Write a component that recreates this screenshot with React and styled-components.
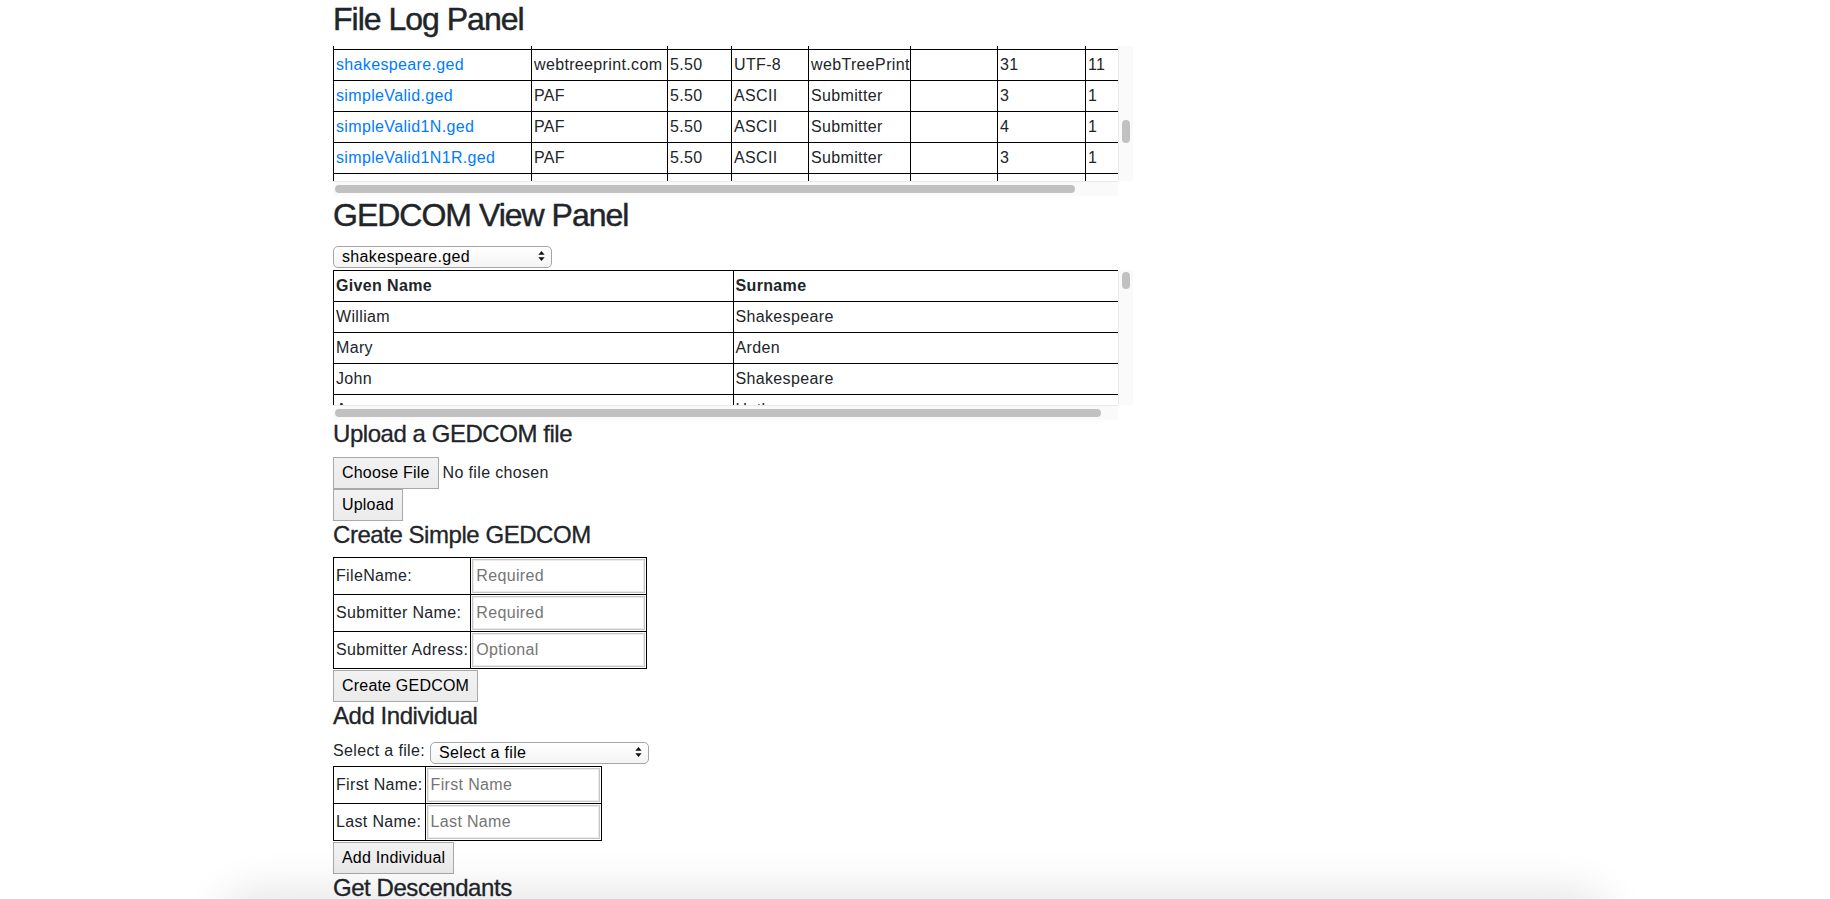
import React, { useLayoutEffect, useRef, useState } from 'react';
import styled, { createGlobalStyle } from 'styled-components';

const GlobalStyle = createGlobalStyle`
  *, *::before, *::after { box-sizing: border-box; }
  html, body { margin: 0; padding: 0; background: #fff; }
  body {
    font-family: "Liberation Sans", Arial, Helvetica, sans-serif;
    font-size: 16px;
    line-height: 1.5;
    color: #212529;
    letter-spacing: 0.35px;
  }
`;

const Page = styled.main`
  display: grid;
  grid-template-columns: 333px 800px 1fr;
`;

const Column = styled.div`
  grid-column: 2;
  display: flex;
  flex-direction: column;
  align-items: flex-start;
`;

const PanelTitle = styled.h2`
  margin: 0 0 8px;
  font-size: 32px;
  font-weight: 500;
  line-height: 1.2;
  letter-spacing: -1px;
  -webkit-text-stroke: 0.45px currentColor;
`;

const SectionTitle = styled.h4`
  margin: 0 0 8px;
  font-size: 24px;
  font-weight: 500;
  line-height: 1.2;
  letter-spacing: -0.45px;
  -webkit-text-stroke: 0.3px currentColor;
`;

/* scroll panel drawn with its own (mac-style) scroll bars */
const ScrollFrame = styled.div`
  display: grid;
  grid-template-columns: 785px 15px;
  grid-template-rows: 135px 15px;
  width: 800px;
  height: 150px;
  margin-top: ${(p) => p.$gap || 0}px;
`;

const Viewport = styled.div`
  overflow: hidden;
`;

const VTrack = styled.div`
  position: relative;
  background: #fafafa;
  border-left: 1px solid #ebebeb;
`;

const HTrack = styled.div`
  position: relative;
  background: #fafafa;
  border-top: 1px solid #ebebeb;
`;

const Corner = styled.div`
  background: #fff;
`;

const VThumb = styled.div`
  position: absolute;
  left: 3px;
  width: 8px;
  border-radius: 4px;
  background: #c1c1c1;
`;

const HThumb = styled.div`
  position: absolute;
  top: 3px;
  height: 8px;
  border-radius: 4px;
  background: #c1c1c1;
`;

const DataTable = styled.table`
  border-collapse: collapse;
  table-layout: fixed;
  width: ${(p) => p.$width}px;
`;

const HeadCell = styled.th`
  border: 1px solid #000;
  padding: 3px 2px;
  line-height: 24px;
  font-weight: 700;
  text-align: left;
  vertical-align: top;
`;

const Cell = styled.td`
  border: 1px solid #000;
  padding: 3px 2px;
  line-height: 24px;
  white-space: nowrap;
  overflow: hidden;
  vertical-align: top;
`;

const FileLink = styled.a`
  color: #007bff;
  text-decoration: none;
`;

const SelectLine = styled.div`
  display: flex;
  align-items: flex-end;
  gap: 5px;
  height: 24px;
`;

const SelectWrap = styled.div`
  position: relative;
  width: 219px;
  height: 22px;
`;

const NativeSelect = styled.select`
  appearance: none;
  -webkit-appearance: none;
  width: 100%;
  height: 22px;
  margin: 0;
  padding: 0 22px 0 8px;
  border: 1px solid #a5a5a5;
  border-radius: 5px;
  background: linear-gradient(#ffffff, #f4f4f4);
  font-family: inherit;
  font-size: 16px;
  letter-spacing: 0.35px;
  line-height: 20px;
  color: #000;
`;

const Arrows = styled.svg`
  position: absolute;
  right: 7px;
  top: 50%;
  transform: translateY(-50%);
  pointer-events: none;
`;

const Stack = styled.div`
  display: flex;
  flex-direction: column;
  align-items: flex-start;
`;

const FileRow = styled.div`
  display: flex;
  align-items: center;
  gap: 4px;
`;

const Button = styled.button`
  display: inline-block;
  margin: 0;
  padding: 6px 8px;
  border: 1px solid #a9a9a9;
  border-radius: 0;
  background: linear-gradient(#f2f2f2, #ebebeb);
  font-family: inherit;
  font-size: 16px;
  line-height: 18px;
  letter-spacing: 0.2px;
  color: #000;
  cursor: pointer;
`;

const ButtonLabel = styled(Button).attrs({ as: 'label' })``;

const HiddenFile = styled.input`
  display: none;
`;

const FormTable = styled.table`
  border-collapse: collapse;
  margin-top: ${(p) => p.$gap || 0}px;
  margin-bottom: 1px;
`;

const LabelCell = styled.td`
  border: 1px solid #000;
  padding: 1px 2px;
  white-space: nowrap;
  vertical-align: middle;
`;

const InputCell = styled.td`
  border: 1px solid #000;
  padding: 1px;
`;

const TextInput = styled.input`
  display: block;
  width: 173px;
  height: 34px;
  margin: 0;
  padding: 1px 3px;
  border: 1px solid #c6c6c6;
  box-shadow: inset 0 0 0 1px #ebebeb;
  font-family: inherit;
  font-size: 16px;
  letter-spacing: 0.35px;
  color: #000;
  &::placeholder { color: #757575; }
`;

const BottomShade = styled.div`
  position: fixed;
  left: 230px;
  right: 230px;
  top: calc(100% + 4px);
  height: 60px;
  border-radius: 30px;
  background: #fff;
  box-shadow: 0 0 40px 16px rgba(0, 0, 0, 0.09);
  pointer-events: none;
`;

const fileHeaders = [
  'File name (click to download)', 'Source', 'GEDC version', 'Encoding',
  'Submitter name', 'Submitter address', 'Number of individuals', 'Number of families',
];
const fileWidths = [198, 136, 64, 77, 102, 87, 88, 75];

const files = [
  ['GEDCOMtest.ged', 'PAF', '5.50', 'ASCII', 'Submitter', '', '5', '2'],
  ['ancestors.ged', 'webtreeprint.com', '5.50', 'UTF-8', 'webTreePrint', '', '14', '5'],
  ['family.ged', 'PAF', '5.50', 'ASCII', 'Submitter', '', '6', '2'],
  ['longNames.ged', 'PAF', '5.50', 'ASCII', 'Submitter', '', '3', '1'],
  ['minValid.ged', 'PAF', '5.50', 'ASCII', 'Submitter', '', '0', '0'],
  ['nuclearFamily.ged', 'PAF', '5.50', 'ASCII', 'Submitter', '', '4', '1'],
  ['quiney.ged', 'webtreeprint.com', '5.50', 'UTF-8', 'webTreePrint', '', '9', '3'],
  ['royalFamily.ged', 'PAF', '5.50', 'ANSEL', 'Submitter', '', '12', '4'],
  ['sample.ged', 'PAF', '5.50', 'ASCII', 'Submitter', '', '7', '2'],
  ['sample2Gen.ged', 'PAF', '5.50', 'ASCII', 'Submitter', '', '6', '2'],
  ['savedFile.ged', 'PAF', '5.50', 'ASCII', 'Submitter', '', '2', '1'],
  ['shakespeare.ged', 'webtreeprint.com', '5.50', 'UTF-8', 'webTreePrint', '', '31', '11'],
  ['simpleValid.ged', 'PAF', '5.50', 'ASCII', 'Submitter', '', '3', '1'],
  ['simpleValid1N.ged', 'PAF', '5.50', 'ASCII', 'Submitter', '', '4', '1'],
  ['simpleValid1N1R.ged', 'PAF', '5.50', 'ASCII', 'Submitter', '', '3', '1'],
  ['simpleValid2GenE1.ged', 'PAF', '5.50', 'ASCII', 'Submitter', '', '5', '2'],
  ['simpleValid2GenE2.ged', 'PAF', '5.50', 'ASCII', 'Submitter', '', '6', '2'],
  ['simpleValid3GenE3.ged', 'PAF', '5.50', 'ASCII', 'Submitter', '', '8', '3'],
  ['simpleValidFull.ged', 'PAF', '5.50', 'ASCII', 'Submitter', '', '10', '4'],
  ['testSaved.ged', 'PAF', '5.50', 'ASCII', 'Submitter', '', '2', '1'],
  ['twoFamilies.ged', 'PAF', '5.50', 'ASCII', 'Submitter', '', '6', '2'],
  ['validHeader.ged', 'PAF', '5.50', 'ASCII', 'Submitter', '', '1', '0'],
];

const people = [
  ['William', 'Shakespeare'], ['Mary', 'Arden'], ['John', 'Shakespeare'], ['Anne', 'Hathaway'],
  ['Susanna', 'Shakespeare'], ['Hamnet', 'Shakespeare'], ['Judith', 'Shakespeare'], ['John', 'Hall'],
  ['Elizabeth', 'Hall'], ['Thomas', 'Quiney'], ['Shakespeare', 'Quiney'], ['Richard', 'Quiney'],
  ['Thomas', 'Quiney'], ['Thomas', 'Nash'], ['John', 'Bernard'], ['Richard', 'Shakespeare'],
  ['Robert', 'Arden'], ['Joan', 'Shakespeare'], ['Margaret', 'Shakespeare'], ['Gilbert', 'Shakespeare'],
  ['Joan', 'Shakespeare'], ['Anne', 'Shakespeare'], ['Richard', 'Shakespeare'], ['Edmund', 'Shakespeare'],
  ['Richard', 'Hathaway'], ['William', 'Hart'], ['Thomas', 'Hart'], ['Michael', 'Hart'],
  ['Mary', 'Hart'], ['Agnes', 'Webbe'], ['Henry', 'Shakespeare'], ['Thomas', 'Shakespeare'],
  ['Mary', 'Shakespeare'],
];

function ScrollPanel({ gap, initialScroll, children }) {
  const viewport = useRef(null);
  const [m, setM] = useState(null);

  useLayoutEffect(() => {
    const el = viewport.current;
    if (!el) return;
    if (initialScroll) el.scrollTop = initialScroll(el);
    setM({
      sh: el.scrollHeight, ch: el.clientHeight, st: el.scrollTop,
      sw: el.scrollWidth, cw: el.clientWidth, sl: el.scrollLeft,
    });
  }, []);

  const inset = 2;
  let v = null;
  let h = null;
  if (m) {
    const vLen = m.ch - inset * 2;
    v = {
      top: inset + (m.st / m.sh) * vLen,
      height: Math.max(12, (m.ch / m.sh) * vLen),
    };
    const hLen = m.cw - inset * 2;
    h = {
      left: inset + (m.sl / m.sw) * hLen,
      width: Math.max(12, (m.cw / m.sw) * hLen),
    };
  }

  return (
    <ScrollFrame $gap={gap}>
      <Viewport ref={viewport}>{children}</Viewport>
      <VTrack>{v && <VThumb style={v} />}</VTrack>
      <HTrack>{h && <HThumb style={h} />}</HTrack>
      <Corner />
    </ScrollFrame>
  );
}

function SelectBox({ value, options }) {
  return (
    <SelectWrap>
      <NativeSelect defaultValue={value}>
        {options.map((o) => (
          <option key={o} value={o}>{o}</option>
        ))}
      </NativeSelect>
      <Arrows width="7" height="11" viewBox="0 0 7 11" aria-hidden="true">
        <path d="M3.5 0.5 L6.6 4.3 H0.4 Z" fill="#111" />
        <path d="M3.5 10.5 L6.6 6.7 H0.4 Z" fill="#111" />
      </Arrows>
    </SelectWrap>
  );
}

const scrollToTarget = (el) => {
  const row = el.querySelector('[data-target="true"]');
  if (!row) return 0;
  const delta = row.getBoundingClientRect().top - el.getBoundingClientRect().top;
  return Math.round(delta - 4);
};

export default function App() {
  const fileNames = files.map((f) => f[0]);

  return (
    <>
      <GlobalStyle />
      <Page>
        <Column>
          <PanelTitle>File Log Panel</PanelTitle>
          <ScrollPanel initialScroll={scrollToTarget}>
            <DataTable $width={fileWidths.reduce((a, b) => a + b, 0)}>
              <colgroup>
                {fileWidths.map((w, i) => (
                  <col key={i} style={{ width: w }} />
                ))}
              </colgroup>
              <thead>
                <tr>
                  {fileHeaders.map((hd) => (
                    <HeadCell key={hd}>{hd}</HeadCell>
                  ))}
                </tr>
              </thead>
              <tbody>
                {files.map((f) => (
                  <tr key={f[0]} data-target={f[0] === 'shakespeare.ged' ? 'true' : undefined}>
                    <Cell><FileLink href="#">{f[0]}</FileLink></Cell>
                    {f.slice(1).map((val, i) => (
                      <Cell key={i}>{val}</Cell>
                    ))}
                  </tr>
                ))}
              </tbody>
            </DataTable>
          </ScrollPanel>

          <PanelTitle>GEDCOM View Panel</PanelTitle>
          <SelectLine>
            <SelectBox value="shakespeare.ged" options={fileNames} />
          </SelectLine>
          <ScrollPanel gap={3}>
            <DataTable $width={800}>
              <thead>
                <tr>
                  <HeadCell>Given Name</HeadCell>
                  <HeadCell>Surname</HeadCell>
                </tr>
              </thead>
              <tbody>
                {people.map((p, i) => (
                  <tr key={i}>
                    <Cell>{p[0]}</Cell>
                    <Cell>{p[1]}</Cell>
                  </tr>
                ))}
              </tbody>
            </DataTable>
          </ScrollPanel>

          <SectionTitle>Upload a GEDCOM file</SectionTitle>
          <Stack>
            <FileRow>
              <ButtonLabel>
                Choose File
                <HiddenFile type="file" />
              </ButtonLabel>
              <span>No file chosen</span>
            </FileRow>
            <Button type="button">Upload</Button>
          </Stack>

          <SectionTitle>Create Simple GEDCOM</SectionTitle>
          <Stack>
            <FormTable>
              <tbody>
                <tr>
                  <LabelCell>FileName:</LabelCell>
                  <InputCell><TextInput placeholder="Required" /></InputCell>
                </tr>
                <tr>
                  <LabelCell>Submitter Name:</LabelCell>
                  <InputCell><TextInput placeholder="Required" /></InputCell>
                </tr>
                <tr>
                  <LabelCell>Submitter Adress:</LabelCell>
                  <InputCell><TextInput placeholder="Optional" /></InputCell>
                </tr>
              </tbody>
            </FormTable>
            <Button type="button">Create GEDCOM</Button>
          </Stack>

          <SectionTitle>Add Individual</SectionTitle>
          <Stack>
            <SelectLine>
              <span>Select a file:</span>
              <SelectBox value="Select a file" options={['Select a file', ...fileNames]} />
            </SelectLine>
            <FormTable $gap={3}>
              <tbody>
                <tr>
                  <LabelCell>First Name:</LabelCell>
                  <InputCell><TextInput placeholder="First Name" /></InputCell>
                </tr>
                <tr>
                  <LabelCell>Last Name:</LabelCell>
                  <InputCell><TextInput placeholder="Last Name" /></InputCell>
                </tr>
              </tbody>
            </FormTable>
            <Button type="button">Add Individual</Button>
          </Stack>

          <SectionTitle>Get Descendants</SectionTitle>
          <Stack>
            <SelectLine>
              <span>Select a file:</span>
              <SelectBox value="Select a file" options={['Select a file', ...fileNames]} />
            </SelectLine>
          </Stack>
        </Column>
      </Page>
      <BottomShade />
    </>
  );
}
